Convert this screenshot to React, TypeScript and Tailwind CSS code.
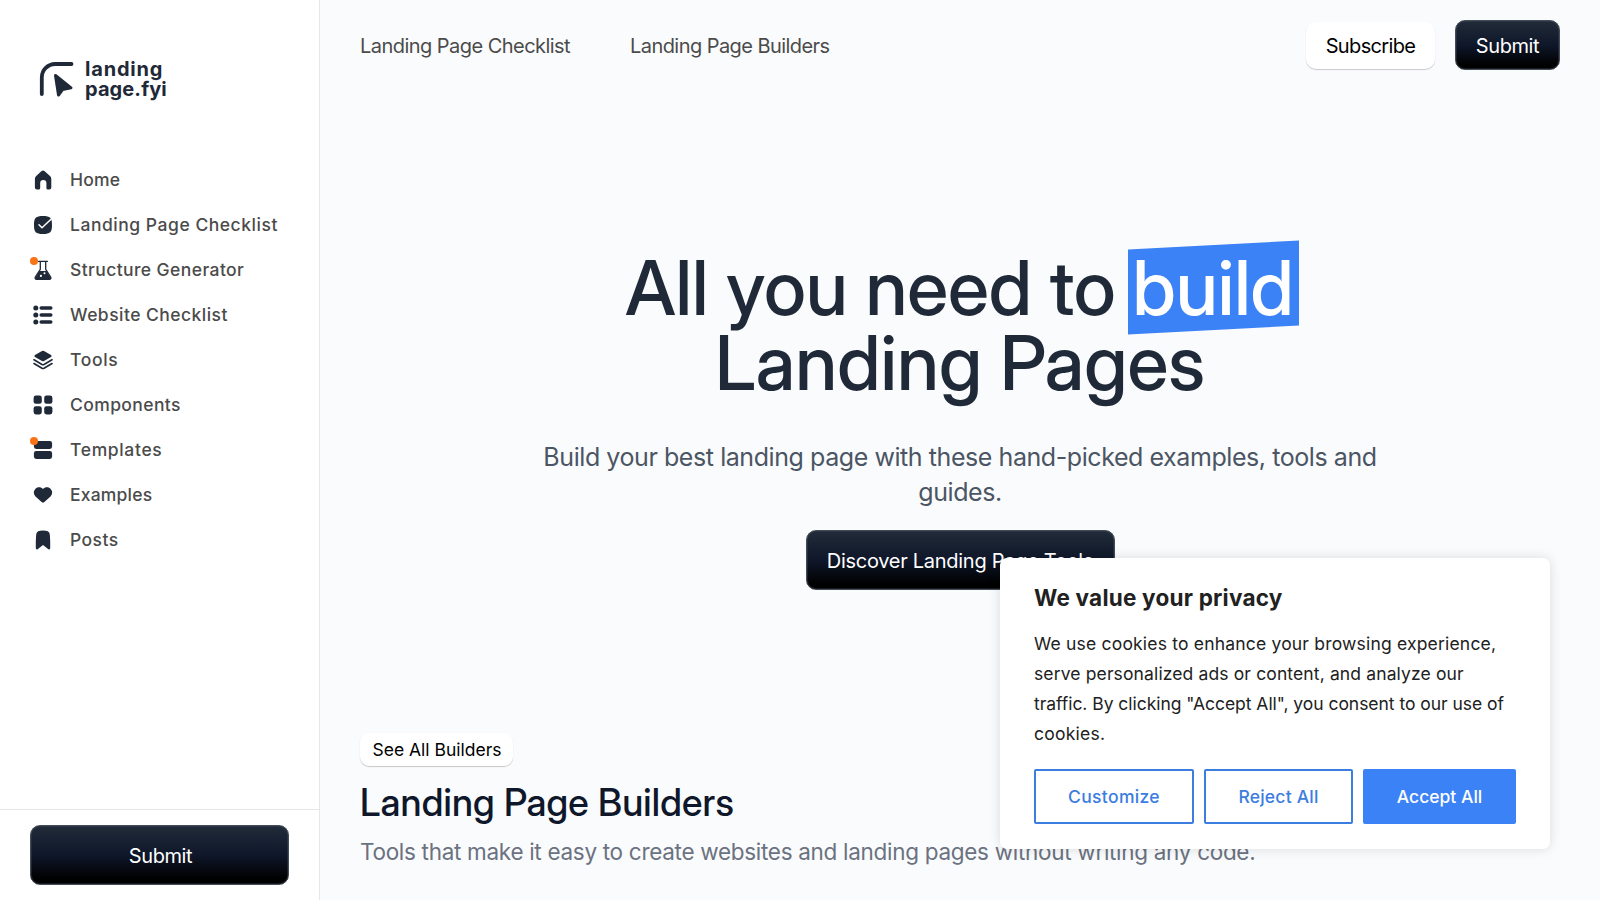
import type { ReactNode } from "react";

const darkButton =
  "flex items-center justify-center rounded-[10px] border border-[#434b57] bg-linear-to-b/srgb from-[#1f2937] from-5% via-[#0f172a] via-50% to-black to-92% text-[20px] leading-[30px] tracking-[-0.4px] text-white shadow-[inset_0_0_0_1px_rgba(75,85,99,0.3)]";

function Icon({ children }: { children: ReactNode }) {
  return (
    <svg viewBox="0 0 20 20" className="h-5 w-5 text-[#1f2937]" fill="currentColor">
      {children}
    </svg>
  );
}

const items: { label: string; tracking: string; dot?: boolean; icon: ReactNode }[] = [
  {
    label: "Home",
    tracking: "tracking-[0.2px]",
    icon: <path d="M8.600 1.100a2 2 0 0 1 2.800 0l5.600 5a4 4 0 0 1 1.300 3V17.400a2 2 0 0 1-2 2h-1.400a1.500 1.500 0 0 1-1.500-1.500V13a3.100 3.100 0 0 0-6.200 0v4.900a1.500 1.500 0 0 1-1.500 1.500H3.900a2 2 0 0 1-2-2V9.100a4 4 0 0 1 1.300-3z" />,
  },
  {
    label: "Landing Page Checklist",
    tracking: "tracking-[0.53px]",
    icon: (
      <>
        <path d="M10 .9c7.200 0 9 1.800 9 9s-1.800 9-9 9-9-1.800-9-9 1.800-9 9-9z" />
        <path d="m6 9.800 3 3L18 4.200" fill="none" stroke="#fff" strokeWidth="1.500" strokeLinecap="round" strokeLinejoin="round" />
      </>
    ),
  },
  {
    label: "Structure Generator",
    tracking: "tracking-[0.41px]",
    dot: true,
    icon: (
      <>
        <path d="M5.600 1.400h8.800M7.300 1.500v7.800L2.300 17q-.8 2.100 1.400 2.300h12.600q2.200-.2 1.400-2.300l-5-7.700V1.500" fill="none" stroke="currentColor" strokeWidth="1.300" strokeLinecap="round" strokeLinejoin="round" />
        <path d="M6.400 11h7.200l4 6.400q.4 1.700-1.400 1.800H3.800Q2 19 2.500 17.400z" />
        <circle cx="11.500" cy="13.300" r="1" fill="#fff" />
        <circle cx="7.900" cy="15.900" r="1.100" fill="#fff" />
      </>
    ),
  },
  {
    label: "Website Checklist",
    tracking: "tracking-[0.46px]",
    icon: (
      <>
        <circle cx="2.800" cy="3" r="2.500" />
        <circle cx="2.800" cy="10" r="2.500" />
        <circle cx="2.800" cy="17" r="2.500" />
        <path d="M8.200 3H17.800M8.200 10H17.800M8.200 17H17.800" stroke="currentColor" strokeWidth="3.500" strokeLinecap="round" />
      </>
    ),
  },
  {
    label: "Tools",
    tracking: "tracking-[0.65px]",
    icon: (
      <>
        <path d="M9 .9q1-.5 2 0l7 4.200q1.400.9 0 1.800l-7 4.200q-1 .5-2 0L2 6.900Q.6 6 2 5.100z" />
        <path d="m1 9.700 8 4.800q1 .5 2 0l8-4.800M1 13.500l8 4.800q1 .5 2 0l8-4.800" fill="none" stroke="currentColor" strokeWidth="1.600" strokeLinecap="round" />
      </>
    ),
  },
  {
    label: "Components",
    tracking: "tracking-[0.4px]",
    icon: (
      <>
        <rect x=".6" y=".6" width="8.200" height="8.200" rx="2.300" />
        <rect x="11.200" y=".6" width="8.200" height="8.200" rx="2.300" />
        <rect x=".6" y="11.200" width="8.200" height="8.200" rx="2.300" />
        <rect x="11.200" y="11.200" width="8.200" height="8.200" rx="2.300" />
      </>
    ),
  },
  {
    label: "Templates",
    tracking: "tracking-[0.65px]",
    dot: true,
    icon: (
      <>
        <rect x=".9" y="1.100" width="18.200" height="7.800" rx="2.300" />
        <rect x=".9" y="11.100" width="18.200" height="7.800" rx="2.300" />
      </>
    ),
  },
  {
    label: "Examples",
    tracking: "tracking-[0.2px]",
    icon: <path d="M10 4C8 1.600 4.800 1.600 2.700 3.500.200 6 .2 9 2.500 11.400l6.100 5.500q1.400 1.100 2.800 0l6.100-5.500C19.800 9 19.800 6 17.300 3.500 15.200 1.600 12 1.600 10 4z" />,
  },
  {
    label: "Posts",
    tracking: "tracking-[0.45px]",
    icon: <path d="M3.300 4Q3.700.6 10 .6T16.700 4q.6 4 .5 14-.1 1.900-1.800 1.200L10 15l-5.400 4.200Q2.900 19.900 2.800 18 2.700 8 3.300 4z" />,
  },
];

function Sidebar() {
  return (
    <aside className="flex h-full w-80 shrink-0 flex-col border-r border-[#e5e7eb] bg-white">
      <div className="flex items-start gap-[10px] pt-[59px] pl-[39px]">
        <svg viewBox="0 0 36 40" className="h-10 w-9 shrink-0" fill="none">
          <path d="M2.800 35V18.500A13.500 13.500 0 0 1 16.300 5H32.500" stroke="#1f2937" strokeWidth="3.800" strokeLinecap="round" />
          <path d="M16.500 16.500 32 28.800 23.500 30.500 19.500 36z" fill="#1f2937" stroke="#1f2937" strokeWidth="3" strokeLinejoin="round" />
        </svg>
        <div className="text-[20px] leading-[20px] font-bold whitespace-nowrap text-[#1f2937]">
          <div className="tracking-[0.8px]">landing</div>
          <div className="tracking-[0.1px]">page.fyi</div>
        </div>
      </div>
      <nav className="mt-[58px] flex grow flex-col">
        {items.map((item) => (
          <a key={item.label} className="relative flex h-[45px] items-center gap-[17.5px] pl-[32.5px]">
            <Icon>{item.icon}</Icon>
            {item.dot && <span className="absolute top-[10px] left-[30px] h-[8px] w-[8px] rounded-full bg-[#f97316]" />}
            <span className={`pt-[2px] text-[17.5px] font-medium whitespace-nowrap text-[#4b4b4b] ${item.tracking}`}>{item.label}</span>
          </a>
        ))}
      </nav>
      <div className="border-t border-[#e5e7eb] pt-[15px] pr-[30px] pb-[15px] pl-[30px]">
        <button className={`${darkButton} h-[60px] w-full pt-px pl-[2px]`}>Submit</button>
      </div>
    </aside>
  );
}

function CookieBanner() {
  return (
    <div className="absolute top-[558px] left-[1000px] h-[291px] w-[550px] rounded-[7px] bg-white pt-[25px] pr-[34px] pl-[34px] text-[#212121] shadow-[0_0_12px_rgba(0,0,0,0.13)]">
      <h2 className="text-[22.5px] leading-[30px] font-bold tracking-[0.22px]">We value your privacy</h2>
      <p className="mt-[16px] text-[17.5px] leading-[30px] whitespace-nowrap">
        <span className="tracking-[0.19px]">We use cookies to enhance your browsing experience,</span>
        <br />
        <span className="tracking-[0.13px]">serve personalized ads or content, and analyze our</span>
        <br />
        <span className="tracking-[-0.04px]">traffic. By clicking "Accept All", you consent to our use of</span>
        <br />
        <span className="tracking-[0.25px]">cookies.</span>
      </p>
      <div className="mt-[20px] flex gap-[10px] text-[17.5px] font-medium">
        <button className="h-[55px] w-[160px] rounded-[2px] border-2 border-[#3b7de0] pt-px tracking-[0.35px] text-[#3b7de0]">Customize</button>
        <button className="h-[55px] w-[149px] rounded-[2px] border-2 border-[#3b7de0] pt-px tracking-[0.2px] text-[#3b7de0]">Reject All</button>
        <button className="h-[55px] w-[153px] rounded-[2px] bg-[#3b82f6] pt-px text-white">Accept All</button>
      </div>
    </div>
  );
}

export default function App() {
  return (
    <div className="relative flex h-[900px] w-[1600px] overflow-hidden bg-[#fafbfd] font-['Inter',sans-serif]">
      <Sidebar />
      <main className="flex grow flex-col px-10">
        <header className="flex h-[90px] shrink-0 items-center text-[20px] text-[#4b4b4b]">
          <a className="w-[270px] pt-[2px] tracking-[-0.54px] whitespace-nowrap">Landing Page Checklist</a>
          <a className="grow pt-[2px] tracking-[-0.56px] whitespace-nowrap">Landing Page Builders</a>
          <button className="h-[47px] w-[129px] rounded-[10px] bg-white pt-px tracking-[-0.65px] text-black shadow-[0_1px_1px_rgba(0,0,0,0.2)]">Subscribe</button>
          <button className={`${darkButton} ml-5 h-[50px] w-[105px] pt-px`}>Submit</button>
        </header>
        <section className="mt-[160px] flex flex-col items-center text-center">
          <h1 className="font-['Inter_Display','Inter',sans-serif] text-[75px] leading-[75px] font-medium text-[#1f2937]">
            <span className="ml-[4px] tracking-[-0.1px]">All you need to</span>
            <span className="relative ml-[12px] inline-block px-[5px] text-white">
              <span className="absolute inset-x-0 -top-[5px] h-[85px] -skew-y-3 bg-[#3b82f6]" />
              <span className="relative">build</span>
            </span>
            <br />
            Landing Pages
          </h1>
          <p className="mt-10 text-[25px] leading-[35px] tracking-[-0.43px] whitespace-nowrap text-[#4b5563]">
            Build your best landing page with these hand-picked examples, tools and
            <br />
            guides.
          </p>
          <button className={`${darkButton} mt-5 h-[60px] w-[309px] pt-[2px]`}><span className="tracking-[-0.28px]">Discover Landing Page Tools</span></button>
        </section>
        <section className="mt-[143px] flex flex-col items-start">
          <button className="h-[33px] w-[153px] rounded-[9px] bg-white pt-px pl-px text-[17.5px] whitespace-nowrap text-black shadow-[0_1px_1px_rgba(0,0,0,0.2)]">See All Builders</button>
          <h2 className="mt-[14px] font-['Inter_Display','Inter',sans-serif] text-[37.5px] leading-[45px] font-medium tracking-[0.18px] text-[#0f172a]">Landing Page Builders</h2>
          <p className="mt-[9px] text-[22.5px] leading-[35px] tracking-[-0.3px] text-[#6b7280]">Tools that make it easy to create websites and landing pages without writing any code.</p>
        </section>
      </main>
      <CookieBanner />
    </div>
  );
}
